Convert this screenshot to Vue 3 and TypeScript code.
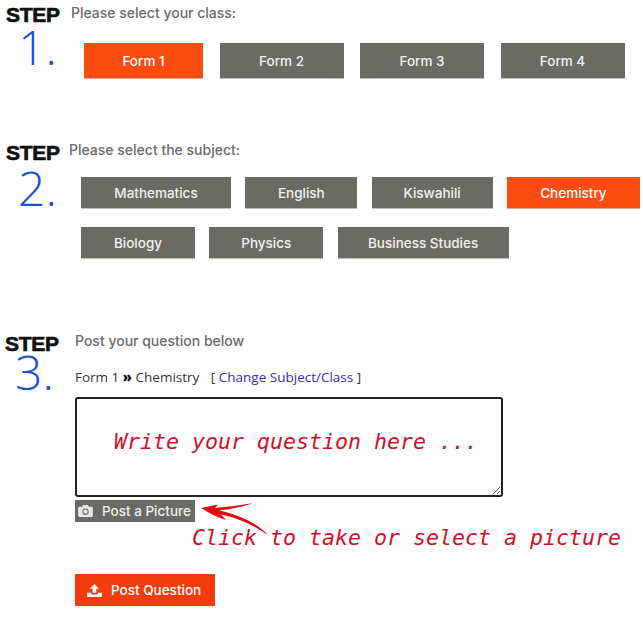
<script setup lang="ts">
import { ref } from 'vue';

const classes = ref(['Form 1', 'Form 2', 'Form 3', 'Form 4']);
const subjectRows = ref([
	[
		{ name: 'Mathematics', width: 150 },
		{ name: 'English', width: 112 },
		{ name: 'Kiswahili', width: 121 },
		{ name: 'Chemistry', width: 133 },
	],
	[
		{ name: 'Biology', width: 114 },
		{ name: 'Physics', width: 114 },
		{ name: 'Business Studies', width: 171 },
	],
]);
const activeClass = ref('Form 1');
const activeSubject = ref('Chemistry');
</script>

<template>
	<main class="page">
		<section class="step step-one">
			<div class="step-mark">
				<div class="step-word">STEP</div>
				<div class="step-num">1.</div>
			</div>
			<div class="step-body">
				<p class="prompt">Please select your class:</p>
				<div class="class-row">
					<button
						v-for="item in classes"
						:key="item"
						class="btn class-btn"
						:class="{ active: item === activeClass }"
						@click="activeClass = item"
					>{{ item }}</button>
				</div>
			</div>
		</section>

		<section class="step step-two">
			<div class="step-mark">
				<div class="step-word">STEP</div>
				<div class="step-num">2.</div>
			</div>
			<div class="step-body">
				<p class="prompt">Please select the subject:</p>
				<div class="subject-rows">
					<div v-for="(row, i) in subjectRows" :key="i" class="subject-row">
						<button
							v-for="item in row"
							:key="item.name"
							class="btn subject-btn"
							:class="{ active: item.name === activeSubject }"
							:style="{ width: item.width + 'px' }"
							@click="activeSubject = item.name"
						>{{ item.name }}</button>
					</div>
				</div>
			</div>
		</section>

		<section class="step step-three">
			<div class="step-mark">
				<div class="step-word">STEP</div>
				<div class="step-num">3.</div>
			</div>
			<div class="step-body">
				<p class="prompt">Post your question below</p>
				<p class="crumb">
					Form 1 <b class="chev">»</b> Chemistry
					<span class="change">[ <a href="#">Change Subject/Class</a> ]</span>
				</p>
				<textarea class="question" placeholder="Write your question here ..."></textarea>
				<button class="picture-btn">
					<svg width="15" height="12" viewBox="0 0 16 13">
						<path fill="#e8e8e6" d="M5.300 0 4.500 2H1.500C.7 2 0 2.700 0 3.500v8C0 12.300.7 13 1.500 13h13c.8 0 1.500-.7 1.500-1.500v-8C16 2.700 15.300 2 14.500 2h-3l-.8-2z" />
						<circle cx="8" cy="7.300" r="3.500" fill="#6b6b65" />
						<circle cx="8" cy="7.300" r="2.300" fill="#e8e8e6" />
					</svg>
					<span>Post a Picture</span>
				</button>
				<button class="post-btn">
					<svg width="15" height="13" viewBox="0 0 16 14">
						<path fill="#fff" d="M8 0 13 5H10V9.500H6V5H3zM0 9.500h4.600v1.800h6.800V9.500H16V14H0z" />
					</svg>
					<span>Post Question</span>
				</button>
			</div>
		</section>

		<svg class="arrow" width="70" height="40" viewBox="0 0 70 40">
			<path fill="#e30613" d="M1 8 18 4.500 15 8C27 7 42 5 53 3 42 7 30 9.500 19 10.500 36 14 56 22 68 35 56 27 42 19 21 14.500L26 20C16 17 8 12 1 8z" />
		</svg>
		<p class="hint">Click to take or select a picture</p>
	</main>
</template>

<style scoped>
.page {
	position: relative;
	width: 643px;
	height: 618px;
	overflow: hidden;
	background: #fff;
	font-family: Inter, "Open Sans", sans-serif;
}

p {
	margin: 0;
}

.step {
	display: flex;
}

.step-mark {
	flex: none;
	width: 66px;
}

.step-word {
	font-family: "Liberation Sans", Arial, sans-serif;
	font-size: 21px;
	line-height: 16px;
	font-weight: 700;
	color: #111;
	letter-spacing: -0.3px;
	-webkit-text-stroke: 0.7px #111;
}

.step-num {
	font-family: "Open Sans", sans-serif;
	font-weight: 350;
	font-size: 48px;
	line-height: 46px;
	color: #1e50d2;
}

.step-one {
	padding: 7px 0 0 6px;
	height: 139px;
	box-sizing: border-box;
}

.step-one .step-num {
	margin: 1px 0 0 12px;
}

.step-two {
	padding: 0 0 0 6px;
	height: 189px;
	box-sizing: border-box;
}

.step-two .step-mark {
	padding-top: 6px;
}

.step-two .step-num {
	margin: 4px 0 0 12px;
}

.step-three {
	padding: 0 0 0 5px;
}

.step-three .step-mark {
	padding-top: 8px;
}

.step-three .step-num {
	margin: -3px 0 0 10px;
}

.prompt {
	font-size: 14px;
	line-height: 16px;
	font-weight: 500;
	color: #6a6a6a;
}

.step-one .prompt {
	margin-top: -2px;
}

.step-two .prompt {
	margin-top: 3px;
}

.step-one .step-body {
	margin-left: -1px;
}

.step-two .step-body {
	margin-left: -3px;
}

.step-three .step-body {
	margin-left: 4px;
}

.class-row {
	display: flex;
	gap: 16.500px;
	margin: 22px 0 0 13px;
}

.btn {
	padding: 0;
	border: 0;
	border-bottom: 1px solid #bdbdb8;
	color: #f2f2f0;
	background: #6b6b65;
	font-family: inherit;
	font-size: 13.500px;
	font-weight: 500;
}

.btn.active {
	background: #fb4c11;
	border-bottom-color: #e0a58c;
	color: #fff;
}

.class-btn {
	width: 124px;
	height: 36px;
}

.class-btn:first-child {
	width: 119px;
}

.subject-rows {
	display: flex;
	flex-direction: column;
	gap: 18px;
	margin: 19px 0 0 12px;
}

.subject-row {
	display: flex;
	gap: 14.300px;
}

.subject-btn {
	height: 32px;
}

.step-three .prompt {
	padding-top: 5px;
}

.crumb {
	margin-top: 19px;
	font-family: "Open Sans", sans-serif;
	font-size: 13.500px;
	line-height: 18px;
	color: #333;
}

.chev {
	color: #111;
	font-weight: 800;
}

.change {
	margin-left: 8px;
}

.change a {
	color: #2f2fb4;
	text-decoration: none;
}

.question {
	display: block;
	box-sizing: border-box;
	width: 428px;
	height: 100px;
	margin-top: 11px;
	padding: 30px 0 0 37px;
	border: 2px solid #222;
	border-radius: 3px;
	outline: none;
	font-family: "DejaVu Sans Mono", monospace;
	font-style: italic;
	font-size: 21.600px;
	line-height: 26px;
}

.question::placeholder {
	color: #d0102a;
	opacity: 1;
}

.picture-btn {
	display: flex;
	align-items: center;
	gap: 9px;
	width: 120px;
	height: 22px;
	margin-top: 3px;
	padding: 0 0 0 3px;
	border: 0;
	background: #6b6b65;
	color: #f0f0ee;
	font-family: inherit;
	font-size: 13.500px;
	font-weight: 500;
	white-space: nowrap;
}

.post-btn {
	display: flex;
	align-items: center;
	gap: 9px;
	width: 140px;
	height: 32px;
	margin-top: 52px;
	padding: 0 0 0 12px;
	border: 0;
	background: #f43c0e;
	color: #fff;
	font-family: inherit;
	font-size: 13.500px;
	font-weight: 500;
	white-space: nowrap;
}

.arrow {
	position: absolute;
	left: 200px;
	top: 500px;
}

.hint {
	position: absolute;
	left: 192px;
	top: 525px;
	font-family: "DejaVu Sans Mono", monospace;
	font-style: italic;
	font-size: 21.600px;
	line-height: 26px;
	color: #d0102a;
	white-space: nowrap;
}
</style>
